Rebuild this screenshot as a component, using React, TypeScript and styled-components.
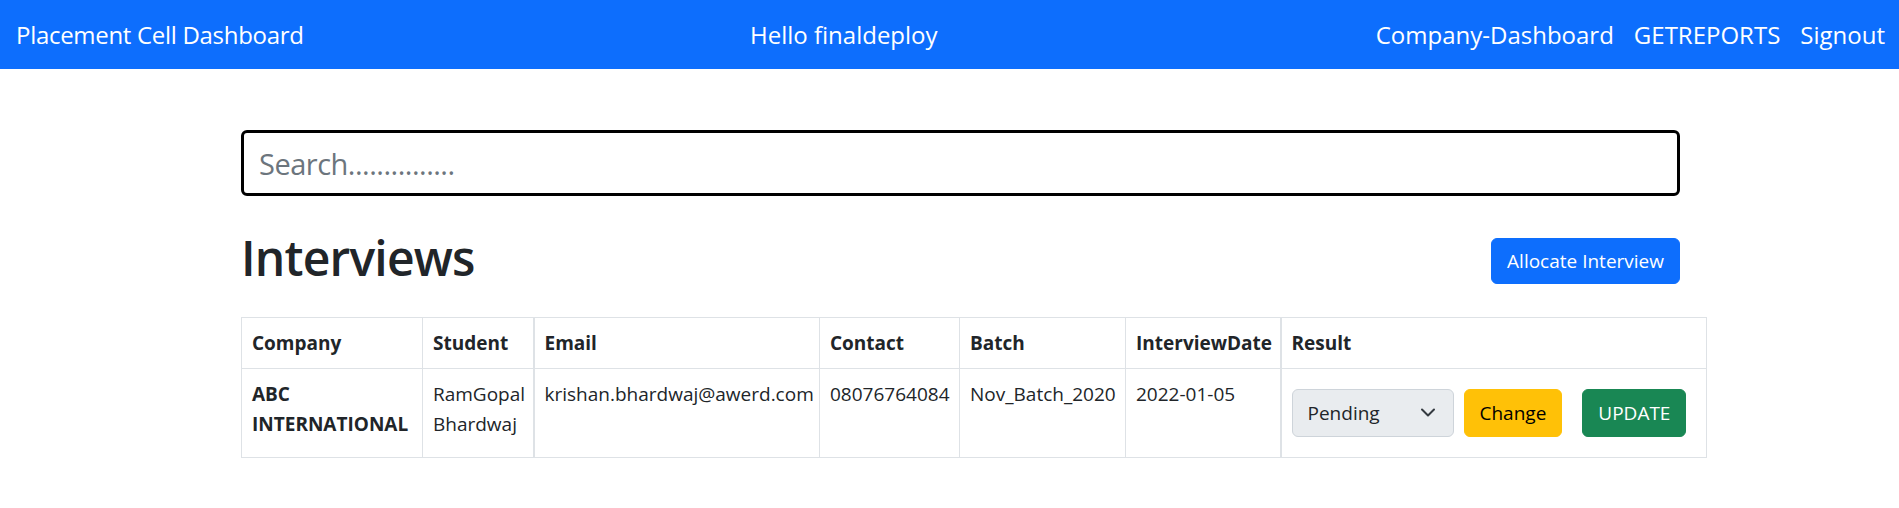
import React from "react";
import styled, { createGlobalStyle } from "styled-components";

const GlobalStyle = createGlobalStyle`
  html, body {
    margin: 0;
    padding: 0;
    background: #ffffff;
    color: #212529;
    font-family: "Open Sans", "Noto Sans", sans-serif;
  }
  * { box-sizing: border-box; }
`;

const NavBar = styled.nav`
  height: 69px;
  background: #0d6efd;
  display: grid;
  grid-template-columns: 734px auto 1fr;
  align-items: center;
  padding: 0 14px 0 16px;
  color: #ffffff;
  font-size: 24px;
`;

const Brand = styled.a`
  color: #ffffff;
  text-decoration: none;
  white-space: nowrap;
  letter-spacing: -0.3px;
`;

const Greeting = styled.span`
  white-space: nowrap;
`;

const NavLinks = styled.div`
  justify-self: end;
  display: flex;
  gap: 20px;
`;

const NavLink = styled.a`
  color: #ffffff;
  text-decoration: none;
  white-space: nowrap;
`;

const Main = styled.main`
  width: 1439px;
  margin-left: 241px;
  padding-top: 61px;
`;

const SearchInput = styled.input`
  display: block;
  width: 100%;
  height: 66px;
  border: 3px solid #000000;
  border-radius: 6px;
  padding: 0 15px;
  font-family: inherit;
  font-size: 29px;
  color: #212529;
  outline: none;
  &::placeholder {
    color: #6c757d;
    letter-spacing: -0.5px;
  }
`;

const HeaderRow = styled.div`
  display: flex;
  justify-content: space-between;
  align-items: flex-start;
  margin-top: 32px;
  height: 60px;
`;

const Title = styled.h1`
  margin: 0;
  font-size: 48px;
  font-weight: 600;
  letter-spacing: -0.8px;
  line-height: 60px;
  color: #212529;
`;

const Button = styled.button<{ $variant: "primary" | "warning" | "success" }>`
  font-family: inherit;
  font-size: 19px;
  line-height: 30px;
  height: ${(p) => (p.$variant === "primary" ? "46px" : "48px")};
  padding: 0 15px;
  border-radius: 6px;
  border: 1px solid transparent;
  white-space: nowrap;
  cursor: pointer;
  background: ${(p) =>
    p.$variant === "primary" ? "#0d6efd" : p.$variant === "warning" ? "#ffc107" : "#198754"};
  border-color: ${(p) =>
    p.$variant === "primary" ? "#0d6efd" : p.$variant === "warning" ? "#ffc107" : "#198754"};
  color: ${(p) => (p.$variant === "warning" ? "#000000" : "#ffffff")};
`;

const AllocateButton = styled(Button)`
  margin-top: 10px;
`;

const Table = styled.table`
  margin-top: 29px;
  width: 1465px;
  table-layout: fixed;
  border-collapse: collapse;
  border: 1px solid #dee2e6;
  font-size: 19px;
  line-height: 30px;
`;

const Th = styled.th<{ $thick?: boolean }>`
  text-align: left;
  font-weight: 700;
  padding: 10px;
  border: 1px solid #dee2e6;
  border-left-width: ${(p) => (p.$thick ? "2px" : "1px")};
  vertical-align: top;
`;

const Td = styled.td<{ $thick?: boolean; $bold?: boolean }>`
  padding: 10px;
  border: 1px solid #dee2e6;
  border-left-width: ${(p) => (p.$thick ? "2px" : "1px")};
  font-weight: ${(p) => (p.$bold ? 700 : 400)};
  vertical-align: top;
`;

const ResultCell = styled.td`
  padding: 20px 10px;
  border: 1px solid #dee2e6;
  border-left-width: 2px;
  vertical-align: top;
`;

const Actions = styled.div`
  display: flex;
  align-items: center;
`;

const SelectWrap = styled.div`
  position: relative;
  width: 162px;
  height: 48px;
  margin-right: 10px;
`;

const Select = styled.select`
  appearance: none;
  width: 100%;
  height: 100%;
  background: #e9ecef;
  border: 1px solid #ced4da;
  border-radius: 6px;
  padding: 0 45px 0 15px;
  font-family: inherit;
  font-size: 19px;
  color: #212529;
`;

const Chevron = styled.svg`
  position: absolute;
  right: 18px;
  top: 17px;
  pointer-events: none;
`;

const UpdateButton = styled(Button)`
  margin-left: 20px;
`;

type Col = { label: string; width: number; thick?: boolean };

const columns: Col[] = [
  { label: "Company", width: 181 },
  { label: "Student", width: 111 },
  { label: "Email", width: 286, thick: true },
  { label: "Contact", width: 140 },
  { label: "Batch", width: 166 },
  { label: "InterviewDate", width: 155 },
  { label: "Result", width: 426, thick: true },
];

export default function App() {
  return (
    <>
      <GlobalStyle />
      <NavBar>
        <Brand href="#">Placement Cell Dashboard</Brand>
        <Greeting>Hello finaldeploy</Greeting>
        <NavLinks>
          <NavLink href="#">Company-Dashboard</NavLink>
          <NavLink href="#">GETREPORTS</NavLink>
          <NavLink href="#">Signout</NavLink>
        </NavLinks>
      </NavBar>
      <Main>
        <SearchInput placeholder="Search..............." />
        <HeaderRow>
          <Title>Interviews</Title>
          <AllocateButton $variant="primary">Allocate Interview</AllocateButton>
        </HeaderRow>
        <Table>
          <colgroup>
            {columns.map((c) => (
              <col key={c.label} style={{ width: c.width }} />
            ))}
          </colgroup>
          <thead>
            <tr>
              {columns.map((c) => (
                <Th key={c.label} $thick={c.thick}>
                  {c.label}
                </Th>
              ))}
            </tr>
          </thead>
          <tbody>
            <tr>
              <Td $bold>ABC INTERNATIONAL</Td>
              <Td>RamGopal Bhardwaj</Td>
              <Td $thick>krishan.bhardwaj@awerd.com</Td>
              <Td>08076764084</Td>
              <Td>Nov_Batch_2020</Td>
              <Td>2022-01-05</Td>
              <ResultCell>
                <Actions>
                  <SelectWrap>
                    <Select defaultValue="Pending">
                      <option>Pending</option>
                      <option>Selected</option>
                      <option>Rejected</option>
                    </Select>
                    <Chevron width="16" height="12" viewBox="0 0 16 12">
                      <path
                        d="M2 3.5 L8 9.5 L14 3.5"
                        fill="none"
                        stroke="#343a40"
                        strokeWidth="2"
                        strokeLinecap="round"
                        strokeLinejoin="round"
                      />
                    </Chevron>
                  </SelectWrap>
                  <Button $variant="warning">Change</Button>
                  <UpdateButton $variant="success">UPDATE</UpdateButton>
                </Actions>
              </ResultCell>
            </tr>
          </tbody>
        </Table>
      </Main>
    </>
  );
}
